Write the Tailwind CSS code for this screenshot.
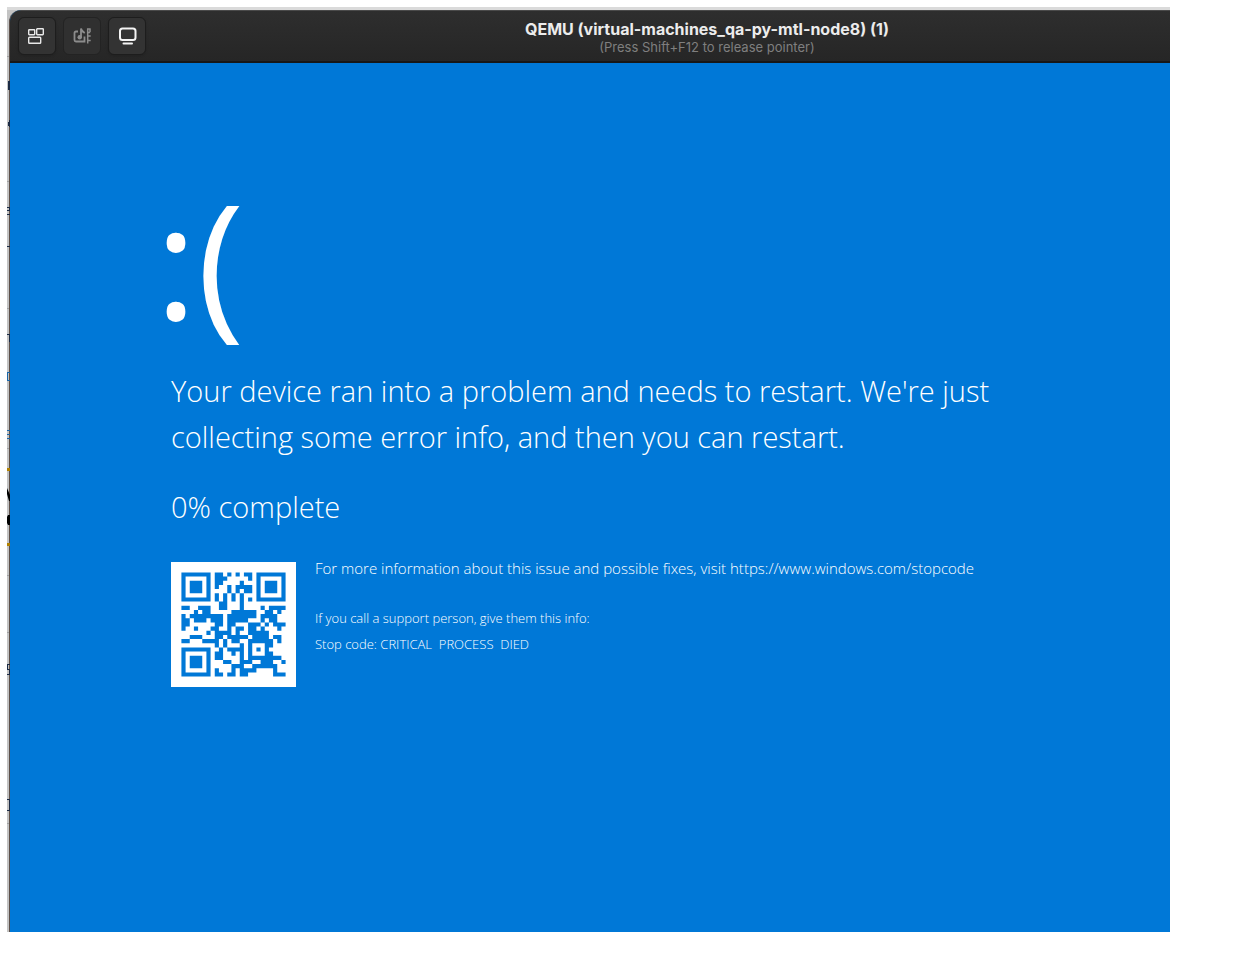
<!DOCTYPE html>
<html lang="en">
<head>
    <meta charset="UTF-8">
    <meta name="viewport" content="width=device-width, initial-scale=1.0">
    <title>QEMU (virtual-machines_qa-py-mtl-node8) (1)</title>
    <script src="https://cdn.jsdelivr.net/npm/@tailwindcss/browser@4"></script>
</head>
<body class="bg-white">
    <div class="min-h-screen flex pt-[7px] pl-[7px] pr-16 pb-[38px]">
        <!-- Desktop behind the window -->
        <div class="relative flex-1 flex min-w-0 pt-[3px] pl-[2px] overflow-hidden bg-[#c3c3c3]">
            <div class="absolute inset-x-0 top-0 h-[3px] bg-[#dadada]"></div>

            <!-- Virtual machine window -->
            <div class="relative flex-1 flex flex-col min-w-0 overflow-hidden rounded-tl-xl border-l border-[#5c4f48] bg-[#0078d7]">
                <header class="grid grid-cols-[1fr_auto_1fr] items-center w-[120%] h-[53px] pl-2 pr-1.5 border-t border-b-2 border-t-[#4a4a4a] border-b-[#171717] bg-linear-to-b from-[#2e2e2e] to-[#262626] font-['Inter']">
                    <div class="flex gap-[7px]">
                        <button type="button" aria-label="Machines" class="flex items-center justify-center size-[38px] rounded-md border border-[#1d1d1d] bg-[#333333] shadow-sm">
                            <svg class="size-5" viewBox="0 0 20 20" fill="none" stroke="#e8e8e8" stroke-width="1.4">
                                <rect x="1.7" y="3.7" width="6" height="5" rx=".6"/>
                                <rect x="9.7" y="2.7" width="6.6" height="6" rx=".6"/>
                                <rect x="1.7" y="11.2" width="12" height="6" rx=".8"/>
                            </svg>
                        </button>
                        <button type="button" aria-label="Media" class="flex items-center justify-center size-[38px] rounded-md border border-[#232323] bg-[#303030]">
                            <svg class="size-5" viewBox="0 0 20 20" fill="none" stroke="#8c8c8c" stroke-width="1.8">
                                <path d="M6 5.500H4q-1.500 0-1.500 1.500v7q0 1.500 1.500 1.500h8.500V10.500"/>
                                <path d="M9 11.500V2.500q.5 2.800 3.800 4.500"/>
                                <circle cx="7.700" cy="11.300" r="2.200" fill="#8c8c8c" stroke="none"/>
                                <path stroke-width="1.500" d="M15.700 17.500V2.300M15.500 3h3.200M15.700 6.500h2.500M15.700 10h3M15.700 14.500h3M18 3v3"/>
                            </svg>
                        </button>
                        <button type="button" aria-label="Display" class="flex items-center justify-center size-[38px] rounded-md border border-[#1d1d1d] bg-[#333333] shadow-sm">
                            <svg class="size-5" viewBox="0 0 20 20" fill="none" stroke="#f4f4f4" stroke-width="2">
                                <rect x="3" y="2.500" width="15.500" height="11.500" rx="2.500"/>
                                <path d="M6.500 17.500h8.500" stroke-linecap="round"/>
                            </svg>
                        </button>
                    </div>
                    <div class="pt-px text-center">
                        <h1 class="text-base leading-5 font-bold text-[#ececec]">QEMU (virtual-machines_qa-py-mtl-node8) (1)</h1>
                        <p class="text-[13px] leading-4 text-[#7f7f7f]">(Press Shift+F12 to release pointer)</p>
                    </div>
                </header>

                <!-- Stop screen -->
                <main class="flex-1 px-[161px] pt-[105px] pb-[60px] text-white font-['Open_Sans'] font-light">
                    <div class="text-[160px] leading-[180px] -ml-4 font-[370]">:(</div>
                    <p class="mt-5 text-[29px] leading-[46px]">Your device ran into a problem and needs to restart. We're just<br>collecting some error info, and then you can restart.</p>
                    <p class="mt-6 text-[29px] leading-[46px]">0% complete</p>
                    <div class="mt-8 flex gap-[19px]">
                        <svg id="qr" class="shrink-0 size-[125px] bg-white" viewBox="-2.500 -2.500 30 30" role="img" aria-label="QR code" shape-rendering="geometricPrecision"></svg>
                        <div class="whitespace-nowrap">
                            <p class="-mt-1 text-[15px] leading-5">For more information about this issue and possible fixes, visit https://www.windows.com/stopcode</p>
                            <p class="mt-[27px] text-[13px] leading-[26px]">If you call a support person, give them this info:</p>
                            <p class="text-[13px] leading-[26px]">Stop code: CRITICAL&nbsp; PROCESS&nbsp; DIED</p>
                        </div>
                    </div>
                </main>
            </div>

            <!-- Edge of the document showing past the window -->
            <svg class="absolute left-0 top-0 w-[3px] h-[925px]" viewBox="0 0 3 925" fill="#1c2b44" aria-hidden="true">
                <path fill="#a0a0a0" d="M0 49h2v1H0zM0 174h2v1H0zM0 301h2v1H0zM0 441h2v1H0zM0 568h2v1H0zM0 625h2v1H0zM0 816h2v1H0z"/>
                <path d="M1 74h2v9H1zM2 113h1v7H2zM1 115h1v4H1zM0 200h3v1H0zM2 200h1v4H2zM0 203h3v1H0zM0 207h3v1H0zM0 239h3v1H0zM0 327h3v1H0zM2 328h1v7H2zM0 657h3v1H0zM0 658h1v4H0zM0 662h3v1H0zM2 662h1v5H2zM0 667h3v1H0zM0 792h2v1H0zM2 792h1v12H2zM0 803h2v1H0z"/>
                <path fill="#1a66a8" d="M0 365h3v1H0zM0 366h1v7H0zM0 373h3v1H0zM0 423h3v1H0zM0 427h3v1H0zM0 431h3v1H0z"/>
                <path fill="#b08000" d="M0 461h3v3H0zM0 536h3v3H0z"/>
                <path fill="#000" d="M0 481l3 7v6H2L0 487zM1 508h2v10H1l-1-2v-6z"/>
            </svg>
        </div>
    </div>

    <script>
        const modules = [
            '#######.##.#.#.##.#######',
            '#.....#.###.....#.#.....#',
            '#.###.#.##....#...#.###.#',
            '#.###.#.#..#.####.#.###.#',
            '#.###.#....#.#.##.#.###.#',
            '#.....#.#.#.#.#...#.....#',
            '#######.#.#.#.#.#.#######',
            '.........##...#..........',
            '##..###..##...#....#.####',
            '...#.##.....######..##.#.',
            '#.########.#######.####..',
            '##.###.###.#####...#.##..',
            '##......##.##...###.#.###',
            '#..#...##..#.##.##.#...#.',
            '......#.####.#..#####....',
            '..###...##.#####.####.##.',
            '##...####.#.##..######.#.',
            '........#.#...#.#...##...',
            '#######..#.####.#.#.#....',
            '#.....#.##..#.#.#...##...',
            '#.###.#.##....#.########.',
            '#.###.#...##..###..###..#',
            '#.###.#.....###..######..',
            '#.....#.#...#.####....#..',
            '#######.##.##.##......###'
        ];

        let d = '';
        modules.forEach((row, y) => {
            for (const run of row.matchAll(/#+/g)) {
                d += `M${run.index} ${y}h${run[0].length}v1h-${run[0].length}z`;
            }
        });
        document.getElementById('qr').innerHTML = `<path fill="#0078d7" d="${d}"/>`;
    </script>
</body>
</html>
